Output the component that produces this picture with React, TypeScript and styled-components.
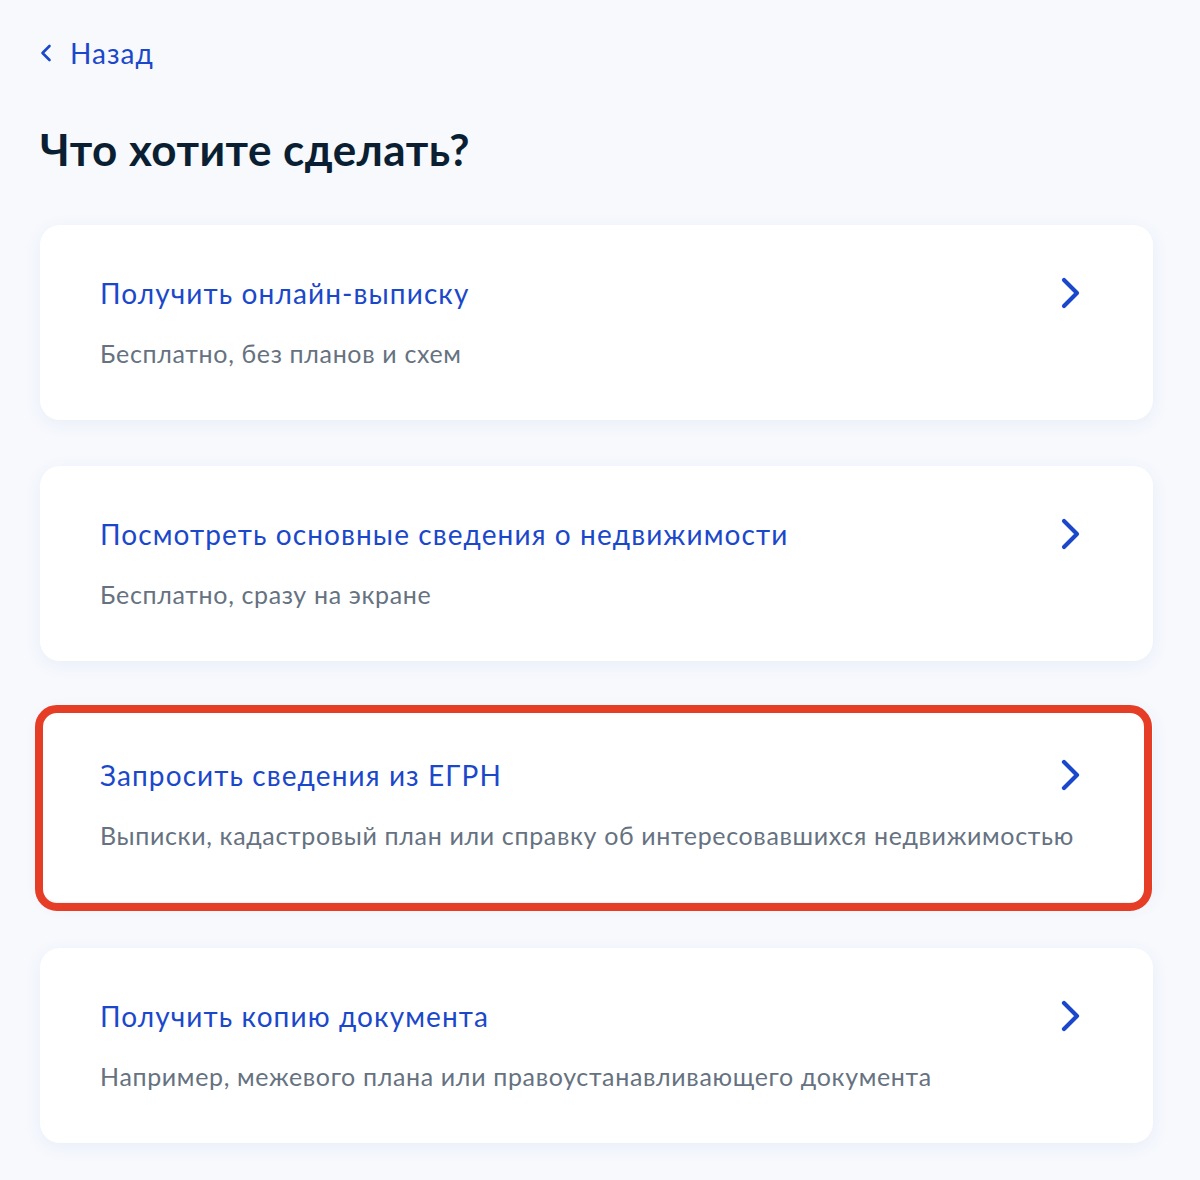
import React from 'react';
import styled, { createGlobalStyle } from 'styled-components';

const GlobalStyle = createGlobalStyle`
  body {
    margin: 0;
    background: #f7f9fd;
    font-family: Lato, 'Noto Sans', sans-serif;
  }
`;

const Page = styled.div`
  padding: 35px 0 40px 40px;
  min-height: 1180px;
  box-sizing: border-box;
`;

const BackLink = styled.a`
  display: inline-flex;
  align-items: center;
  gap: 18px;
  color: #1b48cb;
  font-size: 28px;
  line-height: 36px;
  letter-spacing: 1px;
  text-decoration: none;
  cursor: pointer;
`;

const Heading = styled.h1`
  margin: 52px 0 50px;
  font-size: 44px;
  line-height: 52px;
  font-weight: 700;
  letter-spacing: 0.45px;
  color: #0b1f33;
`;

const List = styled.div`
  width: 1113px;
  display: flex;
  flex-direction: column;
  gap: 46px;
`;

const Card = styled.div`
  position: relative;
  display: flex;
  align-items: flex-start;
  justify-content: space-between;
  height: 195px;
  box-sizing: border-box;
  padding: 50px 71px 0 60px;
  background: #fff;
  border-radius: 20px;
  box-shadow: 0 4px 18px rgba(40, 80, 170, 0.07);
  cursor: pointer;
`;

// red annotation frame drawn over the selected card
const Marker = styled.div`
  position: absolute;
  left: -5px;
  top: -2px;
  right: 1px;
  bottom: -9px;
  border: 8px solid #e63d26;
  border-radius: 22px;
  pointer-events: none;
`;

const Texts = styled.div`
  flex: 1;
  min-width: 0;
  display: flex;
  flex-direction: column;
  gap: 27px;
  white-space: nowrap;
`;

const Title = styled.div`
  color: #1b48cb;
  font-size: 28px;
  line-height: 36px;
  letter-spacing: 1.1px;
`;

const Subtitle = styled.div`
  color: #66727f;
  font-size: 25px;
  line-height: 30px;
  letter-spacing: 0.65px;
`;

const Arrow = styled.div`
  flex-shrink: 0;
  height: 36px;
  display: flex;
  align-items: center;
`;

const ChevronRight = () => (
  <svg width="22" height="32" viewBox="0 0 22 32" fill="none">
    <path d="M4 3 L17 16 L4 29" stroke="#1b48cb" strokeWidth="4.2" strokeLinecap="round" strokeLinejoin="round" />
  </svg>
);

const ChevronLeft = () => (
  <svg width="12" height="18" viewBox="0 0 12 18" fill="none">
    <path d="M9.5 2 L2.5 9 L9.5 16" stroke="#1b48cb" strokeWidth="2.6" strokeLinecap="round" strokeLinejoin="round" />
  </svg>
);

const options = [
  { title: 'Получить онлайн-выписку', sub: 'Бесплатно, без планов и схем' },
  { title: 'Посмотреть основные сведения о недвижимости', sub: 'Бесплатно, сразу на экране' },
  {
    title: 'Запросить сведения из ЕГРН',
    sub: 'Выписки, кадастровый план или справку об интересовавшихся недвижимостью',
    marked: true,
  },
  { title: 'Получить копию документа', sub: 'Например, межевого плана или правоустанавливающего документа' },
];

export default function App() {
  return (
    <>
      <GlobalStyle />
      <Page>
        <BackLink>
          <ChevronLeft />
          Назад
        </BackLink>
        <Heading>Что хотите сделать?</Heading>
        <List>
          {options.map(o => (
            <Card key={o.title}>
              <Texts>
                <Title>{o.title}</Title>
                <Subtitle>{o.sub}</Subtitle>
              </Texts>
              <Arrow>
                <ChevronRight />
              </Arrow>
              {o.marked && <Marker />}
            </Card>
          ))}
        </List>
      </Page>
    </>
  );
}
